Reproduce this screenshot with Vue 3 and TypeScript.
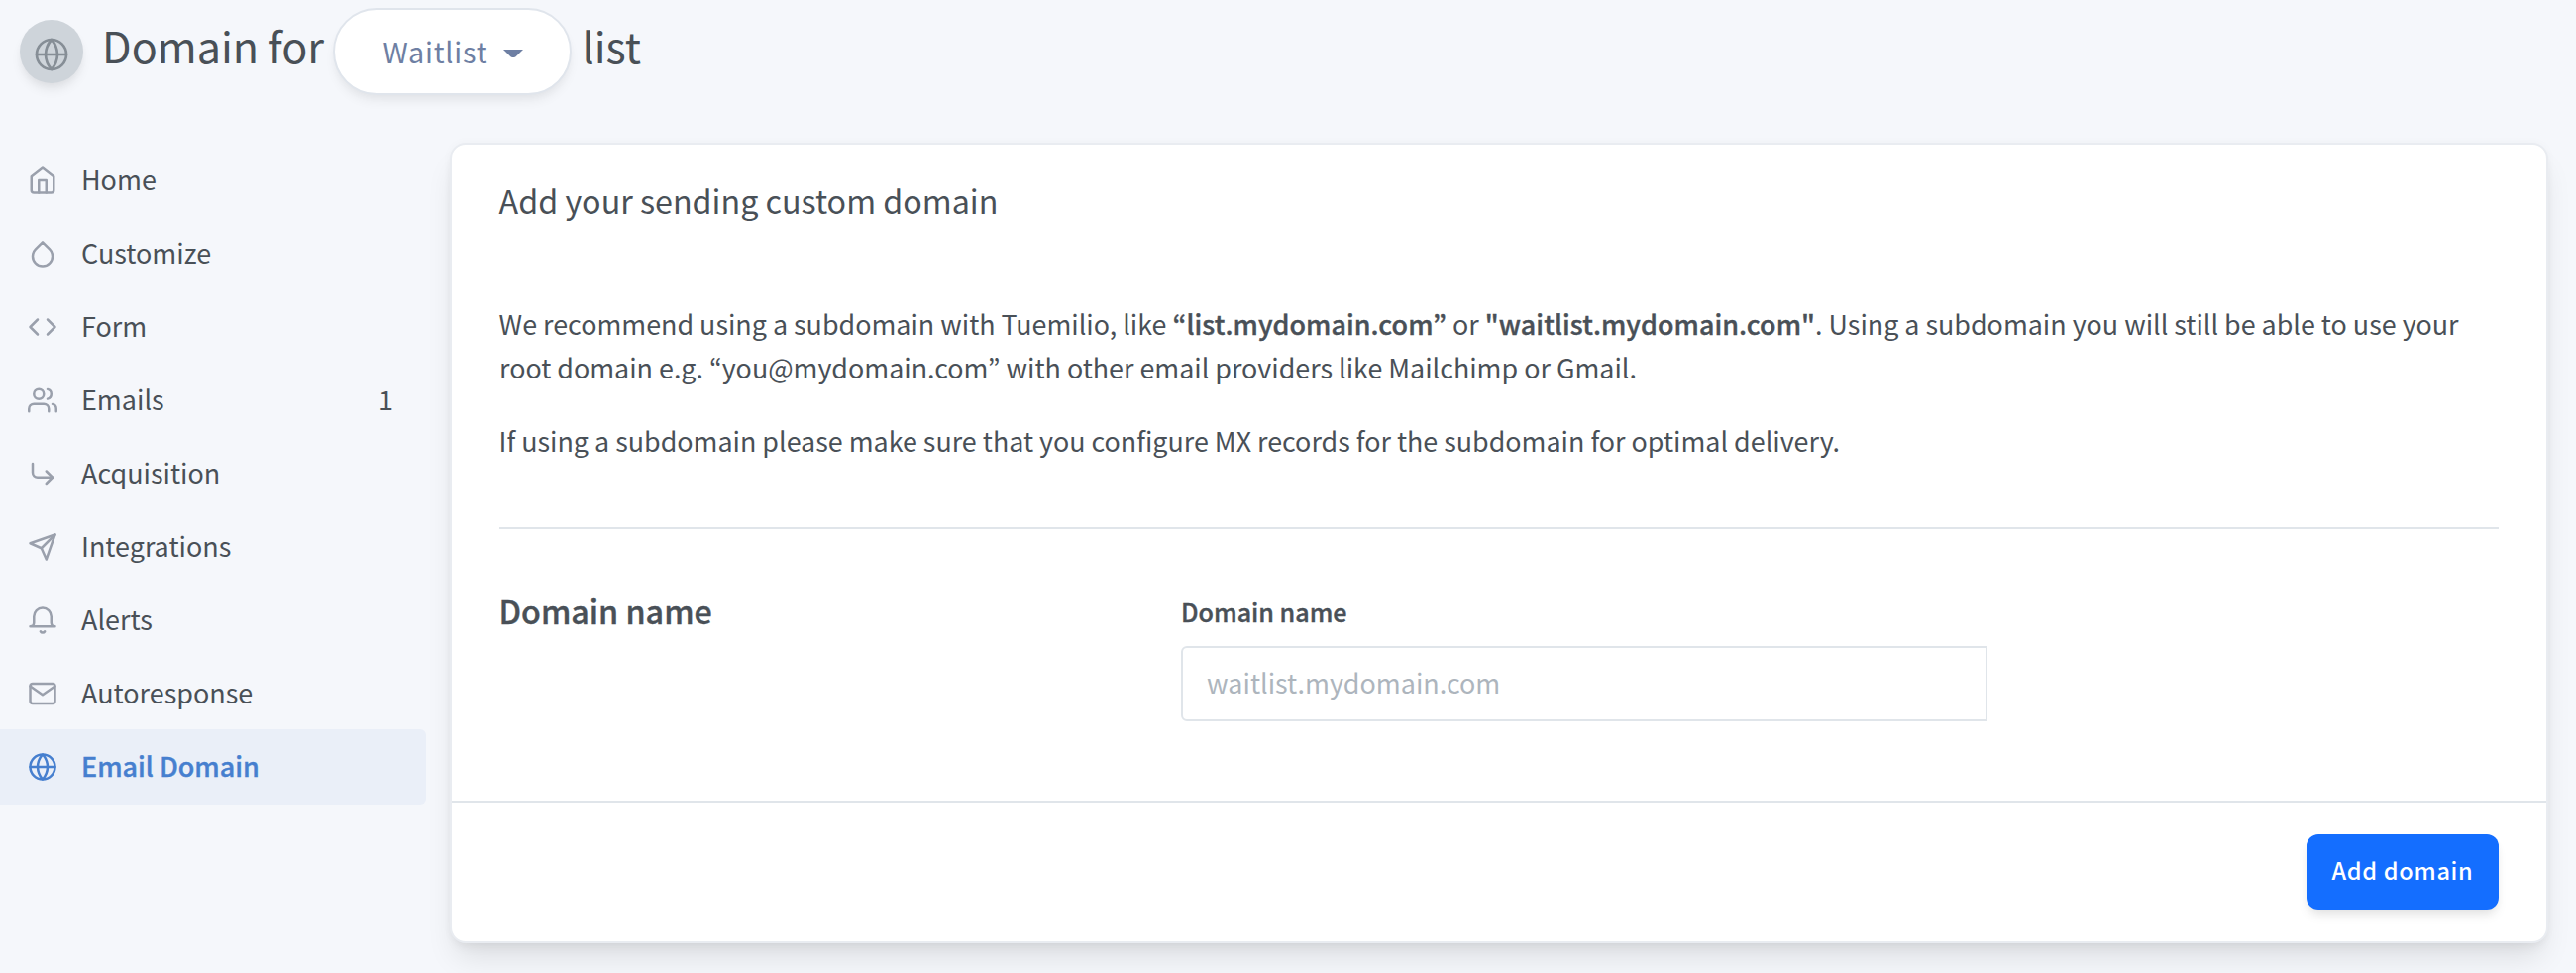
<script setup lang="ts">
import { ref } from 'vue'

interface NavItem {
  label: string
  paths: string[]
  count?: number
  active?: boolean
}

const globe = [
  'M22 12a10 10 0 1 1-20 0 10 10 0 0 1 20 0z',
  'M2 12h20',
  'M12 2a15.3 15.3 0 0 1 4 10 15.3 15.3 0 0 1-4 10 15.3 15.3 0 0 1-4-10 15.3 15.3 0 0 1 4-10z',
]

const navItems: NavItem[] = [
  { label: 'Home', paths: ['M3 9l9-7 9 7v11a2 2 0 0 1-2 2H5a2 2 0 0 1-2-2z', 'M9 22V12h6v10'] },
  { label: 'Customize', paths: ['M12 2.69l5.66 5.66a8 8 0 1 1-11.31 0z'] },
  { label: 'Form', paths: ['M16 18l6-6-6-6', 'M8 6l-6 6 6 6'] },
  {
    label: 'Emails',
    paths: [
      'M17 21v-2a4 4 0 0 0-4-4H5a4 4 0 0 0-4 4v2',
      'M13 7a4 4 0 1 1-8 0 4 4 0 0 1 8 0z',
      'M23 21v-2a4 4 0 0 0-3-3.87',
      'M16 3.13a4 4 0 0 1 0 7.75',
    ],
    count: 1,
  },
  { label: 'Acquisition', paths: ['M15 10l5 5-5 5', 'M4 4v7a4 4 0 0 0 4 4h12'] },
  { label: 'Integrations', paths: ['M22 2L11 13', 'M22 2l-7 20-4-9-9-4 20-7z'] },
  {
    label: 'Alerts',
    paths: ['M22 17H2a3 3 0 0 0 3-3V9a7 7 0 0 1 14 0v5a3 3 0 0 0 3 3z', 'M13.73 21a2 2 0 0 1-3.46 0'],
  },
  {
    label: 'Autoresponse',
    paths: ['M4 4h16c1.1 0 2 .9 2 2v12c0 1.1-.9 2-2 2H4c-1.1 0-2-.9-2-2V6c0-1.1.9-2 2-2z', 'M22 6l-10 7L2 6'],
  },
  { label: 'Email Domain', paths: globe, active: true },
]

const domain = ref('')
</script>

<template>
  <div class="page" lang="en">
    <header class="header">
      <span class="avatar">
        <svg class="avatar-icon" viewBox="0 0 24 24">
          <path v-for="d in globe" :key="d" :d="d" />
        </svg>
      </span>
      <span class="heading">Domain for</span>
      <button class="picker" type="button">
        <span class="picker-label">Waitlist</span>
        <svg class="caret" viewBox="0 0 20 8"><path d="M0 0h20l-7.4 7.2q-.8.8-1.8.8H9.2q-1 0-1.8-.8z" /></svg>
      </button>
      <span class="heading">list</span>
    </header>

    <div class="body">
      <nav class="nav">
        <a v-for="item in navItems" :key="item.label" class="nav-item" :class="{ active: item.active }">
          <svg class="nav-icon" viewBox="0 0 24 24">
            <path v-for="d in item.paths" :key="d" :d="d" />
          </svg>
          <span class="nav-label">{{ item.label }}</span>
          <span v-if="item.count" class="nav-count">{{ item.count }}</span>
        </a>
      </nav>

      <main class="card">
        <div class="card-body">
          <h2 class="title">Add your sending custom domain</h2>
          <div class="intro">
            <p class="text">
              We recommend using a subdomain with Tuemilio, like <strong class="strong">“list.mydomain.com”</strong> or
              <strong class="strong">"waitlist.mydomain.com"</strong>. Using a subdomain you will still be able to use your
              <br />root domain e.g. “you@mydomain.com” with other email providers like Mailchimp or Gmail.
            </p>
            <p class="text">
              If using a subdomain please make sure that you configure MX records for the subdomain for optimal delivery.
            </p>
          </div>
          <section class="section">
            <h3 class="section-title">Domain name</h3>
            <div class="field">
              <label class="label" for="domain">Domain name</label>
              <input id="domain" v-model="domain" class="input" type="text" placeholder="waitlist.mydomain.com" />
            </div>
          </section>
        </div>
        <footer class="card-footer">
          <button class="submit" type="button">Add domain</button>
        </footer>
      </main>
    </div>
  </div>
</template>

<style>
body {
  margin: 0;
  background: #f5f7fb;
}
</style>

<style scoped>
.page {
  box-sizing: border-box;
  width: 2600px;
  height: 982px;
  overflow: hidden;
  background: #f5f7fb;
  color: #495057;
  font-family: "Noto Sans CJK KR", "Noto Sans", sans-serif;
  font-size: 26.95px;
}

.page svg {
  display: block;
  flex: none;
  fill: none;
  stroke: currentColor;
  stroke-linecap: round;
  stroke-linejoin: round;
}

.header {
  display: flex;
  align-items: flex-start;
  box-sizing: border-box;
  height: 144px;
  padding: 8px 0 0 20px;
}

.avatar {
  display: flex;
  justify-content: center;
  box-sizing: border-box;
  width: 64px;
  height: 64px;
  margin: 12px 19px 0 0;
  padding-top: 17px;
  border-radius: 50%;
  background: #ced4da;
  color: #868e96;
  box-shadow: 0 8px 12px -2px rgba(0, 0, 0, 0.08), 0 4px 8px -2px rgba(0, 0, 0, 0.04);
}

.avatar-icon {
  width: 36px;
  height: 36px;
  stroke-width: 1.8;
}

.heading {
  margin-top: 6px;
  font-size: 43.1px;
  line-height: 62px;
  white-space: nowrap;
}

.picker {
  display: flex;
  align-items: flex-start;
  box-sizing: border-box;
  width: 241px;
  height: 88px;
  margin: 0 10px 0 9.3px;
  padding: 21px 0 0 48px;
  border: 2px solid #e0e5ec;
  border-radius: 44px;
  background: #fff;
  color: #6e7fa3;
  font: inherit;
  font-size: 28.8px;
  line-height: 41px;
  letter-spacing: 0.8px;
  box-shadow: 0 8px 12px -2px rgba(0, 0, 0, 0.06), 0 4px 8px -2px rgba(0, 0, 0, 0.03);
}

.page .caret {
  width: 20px;
  height: 8px;
  margin: 19px 0 0 15.5px;
  fill: currentColor;
  stroke: none;
}

.body {
  display: grid;
  grid-template-columns: 430px 2118px;
  column-gap: 24px;
  align-items: start;
}

.nav {
  display: flex;
  flex-direction: column;
}

.nav-item {
  display: flex;
  align-items: center;
  box-sizing: border-box;
  height: 76px;
  margin-bottom: -2px;
  padding: 0 33px 0 28px;
  border-radius: 0 6px 6px 0;
}

.nav-item.active {
  background: #eaeff8;
  color: #467fcf;
  font-weight: 500;
  -webkit-text-stroke: 0.4px currentColor;
}

.nav-icon {
  width: 30px;
  height: 30px;
  color: #9aa0ac;
  stroke-width: 2;
}

.active .nav-icon {
  color: #467fcf;
}

.nav-label,
.nav-count {
  padding-bottom: 3px;
  line-height: 73px;
}

.nav-label {
  flex: 1;
  margin-left: 24px;
}

.nav-count {
  width: 15px;
}

.card {
  border: 2px solid #e9ecf1;
  border-radius: 16px;
  background: #fff;
  box-shadow: 0 20px 30px -6px rgba(0, 0, 0, 0.1), 0 8px 12px -4px rgba(0, 0, 0, 0.05), 0 0 10px rgba(0, 0, 0, 0.03);
}

.card-body {
  padding: 33px 48px 80px;
}

.title,
.section-title {
  margin: 0;
  font-size: 32.25px;
  font-weight: 400;
  line-height: 47px;
}

.intro {
  display: flex;
  flex-direction: column;
  gap: 30px;
  margin-top: 79px;
  padding-bottom: 65px;
  border-bottom: 2px solid #e0e5ea;
}

.text,
.title {
  text-indent: -0.4px;
}

.text {
  margin: 0;
  font-size: 26.87px;
  line-height: 44px;
  white-space: nowrap;
}

.strong {
  font-weight: 500;
  letter-spacing: 0.08px;
  -webkit-text-stroke: 0.4px currentColor;
}

.section {
  display: grid;
  grid-template-columns: 688px 814px;
  align-items: start;
  padding-top: 58px;
}

.section-title {
  margin-top: 1px;
  font-weight: 500;
  text-indent: -0.5px;
  -webkit-text-stroke: 0.4px currentColor;
}

.field {
  display: flex;
  flex-direction: column;
  gap: 17px;
  padding-top: 7px;
}

.label {
  font-size: 25.1px;
  font-weight: 500;
  line-height: 36px;
  -webkit-text-stroke: 0.4px currentColor;
}

.input {
  box-sizing: border-box;
  width: 100%;
  height: 76px;
  padding: 0 24px 3px;
  border: 2px solid #e0e5ea;
  border-radius: 6px 0 0 6px;
  outline: none;
  background: #fff;
  color: #495057;
  font: inherit;
}

.input::placeholder {
  color: #adb5bd;
  opacity: 1;
}

.card-footer {
  display: flex;
  justify-content: flex-end;
  padding: 32px 48px;
  border-top: 2px solid #e0e5ea;
}

.submit {
  box-sizing: border-box;
  width: 194px;
  height: 76px;
  padding: 0 0 4px;
  border: 0;
  border-radius: 12px;
  background: #146eff;
  color: #fff;
  font: inherit;
  font-size: 23.5px;
  font-weight: 500;
  letter-spacing: 0.7px;
  white-space: nowrap;
  box-shadow: 0 8px 12px -2px rgba(0, 0, 0, 0.08), 0 4px 8px -2px rgba(0, 0, 0, 0.05);
}
</style>
